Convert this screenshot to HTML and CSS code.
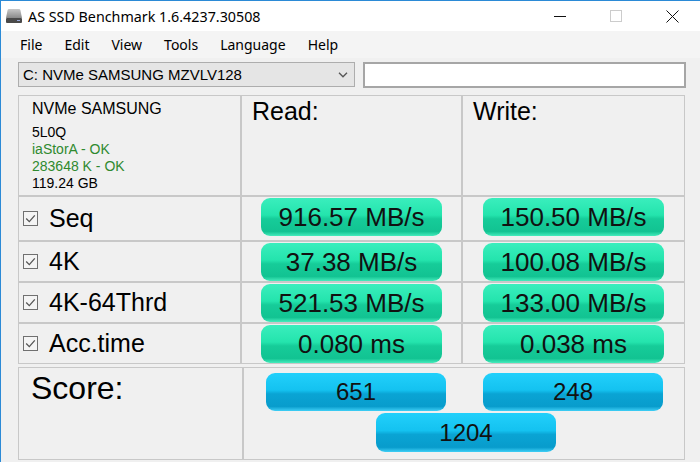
FILE: index.html
```html
<!DOCTYPE html>
<html>
<head>
<meta charset="utf-8">
<title>AS SSD Benchmark</title>
<link rel="stylesheet" href="styles.css">
</head>
<body>
<div class="window">
  <div class="titlebar">
    <svg class="appicon" width="18" height="18" viewBox="0 0 18 18">
      <defs>
        <linearGradient id="top" x1="0" y1="0" x2="0" y2="1">
          <stop offset="0" stop-color="#c8c8c8"/>
          <stop offset="1" stop-color="#8a8a8a"/>
        </linearGradient>
      </defs>
      <path d="M4 2 H14 Q15 2 15.4 3 L17 11 H1 L2.6 3 Q3 2 4 2 Z" fill="url(#top)"/>
      <rect x="1" y="11" width="16" height="5" rx="1" fill="#4a4a4a"/>
      <rect x="12" y="13" width="3" height="1" fill="#9ad"/>
    </svg>
    <span class="title">AS SSD Benchmark 1.6.4237.30508</span>
    <div class="controls">
      <span class="ctl"><svg width="12" height="12" viewBox="0 0 12 12"><line x1="0" y1="6.5" x2="12" y2="6.5" stroke="#111" stroke-width="1"/></svg></span>
      <span class="ctl"><svg width="12" height="12" viewBox="0 0 12 12"><rect x="0.5" y="0.5" width="11" height="11" fill="none" stroke="#cccccc"/></svg></span>
      <span class="ctl"><svg width="13" height="13" viewBox="0 0 13 13"><path d="M0.5 0.5 L12.5 12.5 M12.5 0.5 L0.5 12.5" stroke="#111" stroke-width="1"/></svg></span>
    </div>
  </div>
  <div class="menubar">
    <span>File</span><span>Edit</span><span>View</span><span>Tools</span><span>Language</span><span>Help</span>
  </div>
  <div class="content">
    <div class="toolbar">
      <div class="combo">
        <span>C: NVMe SAMSUNG MZVLV128</span>
        <svg class="chev" width="10" height="6" viewBox="0 0 10 6"><path d="M1 0.8 L5 4.8 L9 0.8" fill="none" stroke="#555" stroke-width="1.3"/></svg>
      </div>
      <div class="textbox"></div>
    </div>
    <div class="results">
      <div class="cell info">
        <div class="name">NVMe SAMSUNG</div>
        <div>5L0Q</div>
        <div class="ok">iaStorA - OK</div>
        <div class="ok">283648 K - OK</div>
        <div>119.24 GB</div>
      </div>
      <div class="cell head">Read:</div>
      <div class="cell head">Write:</div>

      <div class="cell label"><span class="check"><svg width="15" height="15" viewBox="0 0 15 15"><rect x="0.5" y="0.5" width="14" height="14" fill="#f4f4f4" stroke="#707070"/><path d="M3.2 7.5 L6.3 10.6 L11.8 4.4" fill="none" stroke="#555" stroke-width="1.3"/></svg></span>Seq</div>
      <div class="cell val"><div class="pill mint">916.57 MB/s</div></div>
      <div class="cell val"><div class="pill mint">150.50 MB/s</div></div>

      <div class="cell label"><span class="check"><svg width="15" height="15" viewBox="0 0 15 15"><rect x="0.5" y="0.5" width="14" height="14" fill="#f4f4f4" stroke="#707070"/><path d="M3.2 7.5 L6.3 10.6 L11.8 4.4" fill="none" stroke="#555" stroke-width="1.3"/></svg></span>4K</div>
      <div class="cell val"><div class="pill mint">37.38 MB/s</div></div>
      <div class="cell val"><div class="pill mint">100.08 MB/s</div></div>

      <div class="cell label"><span class="check"><svg width="15" height="15" viewBox="0 0 15 15"><rect x="0.5" y="0.5" width="14" height="14" fill="#f4f4f4" stroke="#707070"/><path d="M3.2 7.5 L6.3 10.6 L11.8 4.4" fill="none" stroke="#555" stroke-width="1.3"/></svg></span>4K-64Thrd</div>
      <div class="cell val"><div class="pill mint">521.53 MB/s</div></div>
      <div class="cell val"><div class="pill mint">133.00 MB/s</div></div>

      <div class="cell label"><span class="check"><svg width="15" height="15" viewBox="0 0 15 15"><rect x="0.5" y="0.5" width="14" height="14" fill="#f4f4f4" stroke="#707070"/><path d="M3.2 7.5 L6.3 10.6 L11.8 4.4" fill="none" stroke="#555" stroke-width="1.3"/></svg></span>Acc.time</div>
      <div class="cell val"><div class="pill mint">0.080 ms</div></div>
      <div class="cell val"><div class="pill mint">0.038 ms</div></div>
    </div>
    <div class="score">
      <div class="cell score-label">Score:</div>
      <div class="cell score-vals">
        <div class="score-row"><div class="pill blue">651</div><div class="pill blue">248</div></div>
        <div class="score-row total"><div class="pill blue">1204</div></div>
      </div>
    </div>
  </div>
</div>
</body>
</html>
```
FILE: styles.css
```css
html, body {
  margin: 0;
  padding: 0;
}
body {
  width: 700px;
  height: 462px;
  overflow: hidden;
  background: #f0f0f0;
  font-family: "Liberation Sans", Arial, sans-serif;
  color: #000;
}
.window {
  height: 462px;
  box-sizing: border-box;
  border-left: 1px solid #2b8ad6;
  border-top: 1px solid #2b8ad6;
  background: #f0f0f0;
}
.titlebar {
  height: 30px;
  background: #ffffff;
  display: flex;
  align-items: center;
}
.appicon {
  margin-left: 4px;
  margin-right: 5px;
  flex: none;
}
.title {
  font-family: "Noto Sans", sans-serif;
  font-size: 14.3px;
  color: #000;
}
.controls {
  margin-left: auto;
  display: flex;
  height: 30px;
}
.ctl {
  width: 56px;
  display: flex;
  align-items: center;
  justify-content: center;
}
.menubar {
  height: 27px;
  display: flex;
  align-items: center;
  gap: 22px;
  padding-left: 19px;
  font-family: "Noto Sans", sans-serif;
  font-size: 14px;
  background: #f4f4f4;
}
.content {
  padding: 4px 0 0 17px;
}
.toolbar {
  display: flex;
  gap: 8px;
  height: 26px;
}
.combo {
  width: 337px;
  height: 25px;
  box-sizing: border-box;
  border: 1px solid #adadad;
  background: #e5e5e5;
  display: flex;
  align-items: center;
  padding-left: 4px;
  font-size: 15px;
}
.chev {
  margin-left: auto;
  margin-right: 6px;
}
.textbox {
  width: 323px;
  height: 26px;
  box-sizing: border-box;
  border: 2px solid #a6a6a6;
  background: #ffffff;
}
.results {
  margin-top: 7px;
  display: grid;
  grid-template-columns: 223px 221px 223px;
  grid-template-rows: 101px 45px 41px 41px 41px;
}
.cell {
  border: 1px solid #c8c8c8;
  box-sizing: border-box;
}
.info {
  padding: 4px 0 0 13px;
  font-size: 14px;
  line-height: 17px;
}
.info .name {
  font-size: 16px;
  margin-bottom: 7px;
}
.info .ok {
  color: #2f8a2f;
}
.head {
  font-size: 25px;
  padding: 1px 0 0 10px;
}
.label {
  display: flex;
  align-items: center;
  padding-left: 4px;
  font-size: 25px;
}
.check {
  display: flex;
  margin-right: 11px;
}
.val {
  display: flex;
  justify-content: center;
  align-items: flex-start;
  padding-top: 1px;
}
.pill {
  width: 181px;
  height: 38px;
  box-sizing: border-box;
  border-radius: 9px;
  display: flex;
  align-items: center;
  justify-content: center;
  font-size: 26px;
  color: #111;
}
.mint {
  background: linear-gradient(to bottom, #3aeebd 0%, #24e4ad 45%, #16cc99 55%, #12c392 88%, #45ecbc 100%);
}
.blue {
  width: 180px;
  font-size: 24px;
  background: linear-gradient(to bottom, #22d0fb 0%, #14c2f0 45%, #0aa4d4 55%, #089ccc 88%, #3fcff6 100%);
}
.score {
  margin-top: 3px;
  display: grid;
  grid-template-columns: 225px 442px;
  height: 93px;
}
.score-label {
  font-size: 32px;
  padding: 2px 0 0 12px;
}
.score-vals {
  padding-top: 5px;
}
.score-row {
  display: flex;
  gap: 37px;
  padding-left: 22px;
}
.score-row.total {
  margin-top: 2px;
  padding-left: 132px;
}
.score-row.total .pill {
  height: 39px;
}
```
